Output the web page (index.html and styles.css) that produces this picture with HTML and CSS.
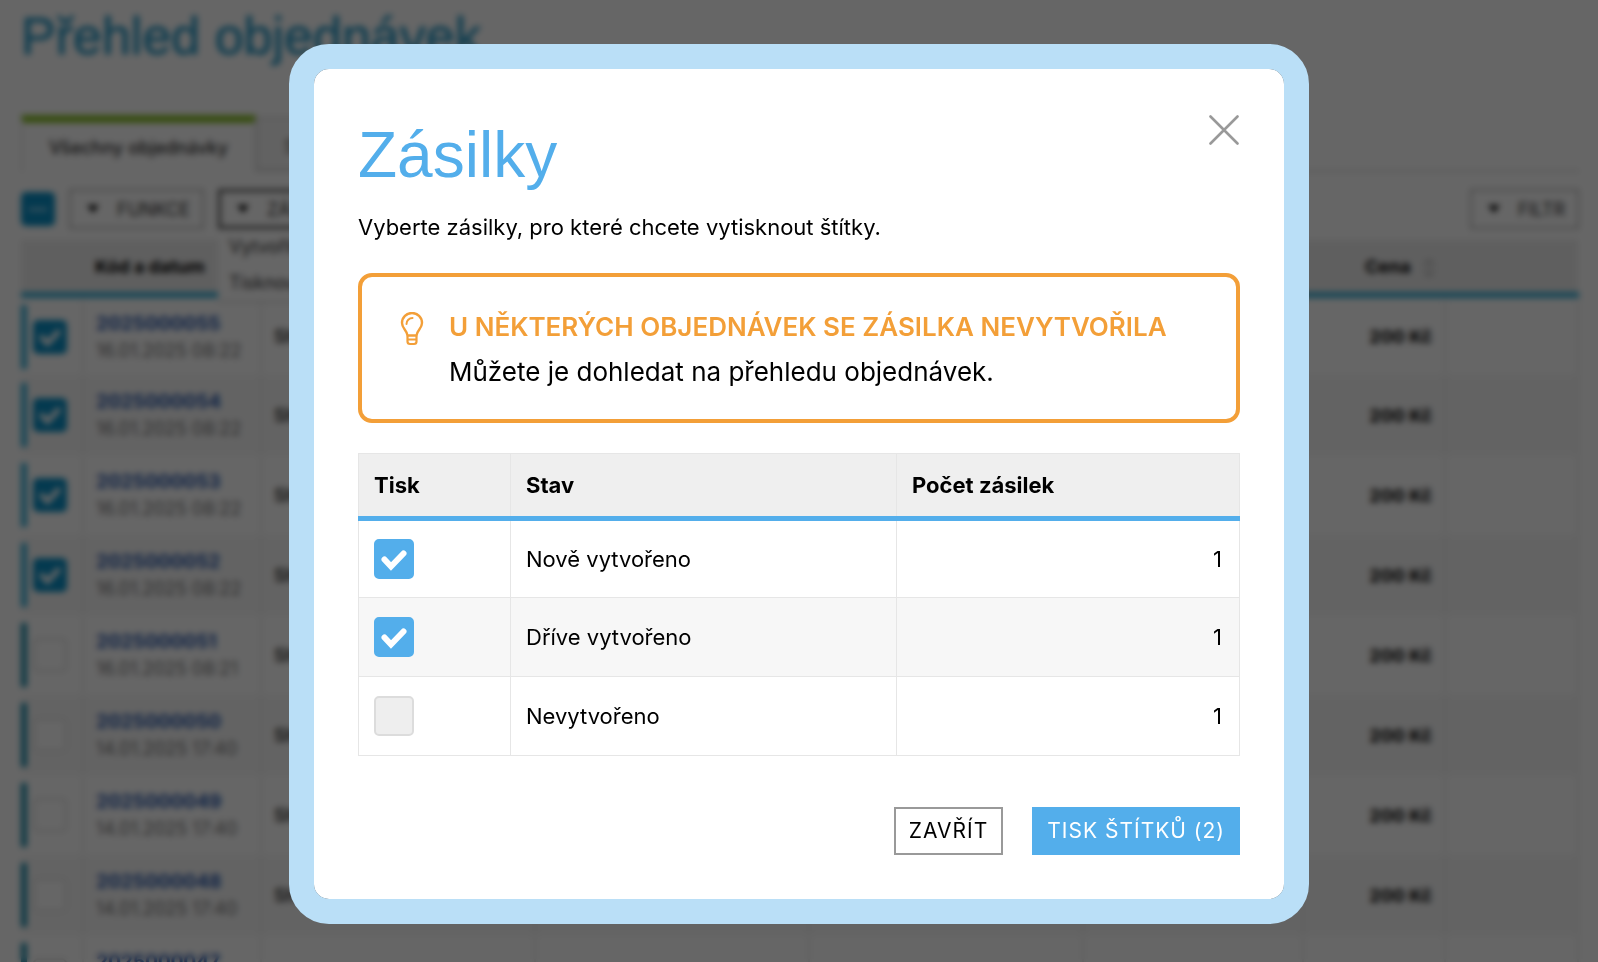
FILE: index.html
```
<!DOCTYPE html>
<html lang="cs">
<head>
    <meta charset="UTF-8">
    <meta name="viewport" content="width=device-width, initial-scale=1.0">
    <title>Přehled objednávek</title>
    <link rel="stylesheet" href="styles.css">
</head>
<body>
    <!-- Přehled objednávek -->
    <main class="page">
        <h1 class="page-title">Přehled objednávek</h1>

        <nav class="tabs">
            <a href="#" class="tab tab-active">Všechny objednávky</a>
            <a href="#" class="tab">Stavy</a>
        </nav>

        <div class="toolbar">
            <button class="select-all" aria-label="Zrušit výběr"></button>
            <button class="tool-btn">Funkce</button>
            <div class="dropdown">
                <button class="tool-btn tool-btn-open">Zásilky</button>
                <div class="dropdown-menu">
                    <a href="#">Vytvořit</a>
                    <a href="#">Tisknout</a>
                </div>
            </div>
            <button class="tool-btn tool-btn-filter">Filtr</button>
        </div>

        <table class="orders">
            <colgroup>
                <col class="col-check"><col class="col-code"><col class="col-name"><col class="col-name"><col class="col-name"><col class="col-ship"><col class="col-price"><col class="col-action">
            </colgroup>
            <thead>
                <tr><th></th><th>Kód a datum</th><th></th><th></th><th></th><th></th><th class="price">Cena <span class="sort"></span></th><th></th></tr>
            </thead>
            <tbody>
                <tr>
                    <td><input type="checkbox" aria-label="2025000055" checked></td>
                    <td><a href="#">2025000055</a><span class="date">16.01.2025 08:22</span></td>
                    <td class="name">Sh</td><td></td><td></td><td></td><td class="price">200 Kč</td><td></td>
                </tr>
                <tr>
                    <td><input type="checkbox" aria-label="2025000054" checked></td>
                    <td><a href="#">2025000054</a><span class="date">16.01.2025 08:22</span></td>
                    <td class="name">Sh</td><td></td><td></td><td></td><td class="price">200 Kč</td><td></td>
                </tr>
                <tr>
                    <td><input type="checkbox" aria-label="2025000053" checked></td>
                    <td><a href="#">2025000053</a><span class="date">16.01.2025 08:22</span></td>
                    <td class="name">Sh</td><td></td><td></td><td></td><td class="price">200 Kč</td><td></td>
                </tr>
                <tr>
                    <td><input type="checkbox" aria-label="2025000052" checked></td>
                    <td><a href="#">2025000052</a><span class="date">16.01.2025 08:22</span></td>
                    <td class="name">Sh</td><td></td><td></td><td></td><td class="price">200 Kč</td><td></td>
                </tr>
                <tr class="seen">
                    <td><input type="checkbox" aria-label="2025000051"></td>
                    <td><a href="#">2025000051</a><span class="date">16.01.2025 08:21</span></td>
                    <td class="name">Sh</td><td></td><td></td><td></td><td class="price">200 Kč</td><td></td>
                </tr>
                <tr class="seen">
                    <td><input type="checkbox" aria-label="2025000050"></td>
                    <td><a href="#">2025000050</a><span class="date">14.01.2025 17:40</span></td>
                    <td class="name">Sh</td><td></td><td></td><td></td><td class="price">200 Kč</td><td></td>
                </tr>
                <tr class="seen">
                    <td><input type="checkbox" aria-label="2025000049"></td>
                    <td><a href="#">2025000049</a><span class="date">14.01.2025 17:40</span></td>
                    <td class="name">Sh</td><td></td><td></td><td></td><td class="price">200 Kč</td><td></td>
                </tr>
                <tr class="seen">
                    <td><input type="checkbox" aria-label="2025000048"></td>
                    <td><a href="#">2025000048</a><span class="date">14.01.2025 17:40</span></td>
                    <td class="name">Sh</td><td></td><td></td><td></td><td class="price">200 Kč</td><td></td>
                </tr>
                <tr class="seen">
                    <td><input type="checkbox" aria-label="2025000047"></td>
                    <td><a href="#">2025000047</a><span class="date">14.01.2025 17:40</span></td>
                    <td class="name">Sh</td><td></td><td></td><td></td><td class="price">200 Kč</td><td></td>
                </tr>
            </tbody>
        </table>
    </main>

    <!-- Modální okno -->
    <div class="overlay">
        <div class="modal" role="dialog" aria-labelledby="modalTitle">
            <button class="modal-close" aria-label="Zavřít okno">
                <svg width="30" height="30" viewBox="0 0 30 30" fill="none" stroke="#999" stroke-width="2.6" stroke-linecap="round">
                    <path d="M1.5 1.5 28.5 28.5M28.5 1.5 1.5 28.5"/>
                </svg>
            </button>
            <h2 class="modal-title" id="modalTitle">Zásilky</h2>
            <p class="modal-text">Vyberte zásilky, pro které chcete vytisknout štítky.</p>

            <div class="alert">
                <svg class="alert-icon" width="24" height="34" viewBox="0 0 24 34" fill="none" stroke="#f39f38" stroke-width="2.4" stroke-linejoin="round">
                    <path d="M7.500 23.500C7 18 2 16.500 2 11a10 10 0 0 1 20 0c0 5.500-5 7-5.500 12.500z"/>
                    <path d="M6.500 12A6 6 0 0 1 12.500 6" stroke-width="2" stroke-linecap="round"/>
                    <path d="M7.500 23.500V29.500a2.500 2.500 0 0 0 2.500 2.500h4a2.500 2.500 0 0 0 2.500-2.500v-6M7.500 27.500h9" stroke-width="2.200"/>
                </svg>
                <div>
                    <h3 class="alert-title">U některých objednávek se zásilka nevytvořila</h3>
                    <p class="alert-text">Můžete je dohledat na přehledu objednávek.</p>
                </div>
            </div>

            <table class="shipments">
                <colgroup><col class="col-print"><col class="col-state"><col></colgroup>
                <thead>
                    <tr><th>Tisk</th><th>Stav</th><th>Počet zásilek</th></tr>
                </thead>
                <tbody>
                    <tr>
                        <td><input type="checkbox" id="stateNew" checked></td>
                        <td><label for="stateNew">Nově vytvořeno</label></td>
                        <td class="count">1</td>
                    </tr>
                    <tr>
                        <td><input type="checkbox" id="stateOld" checked></td>
                        <td><label for="stateOld">Dříve vytvořeno</label></td>
                        <td class="count">1</td>
                    </tr>
                    <tr>
                        <td><input type="checkbox" id="stateNone" disabled></td>
                        <td><label for="stateNone">Nevytvořeno</label></td>
                        <td class="count">1</td>
                    </tr>
                </tbody>
            </table>

            <div class="modal-actions">
                <button class="btn">Zavřít</button>
                <button class="btn btn-primary">Tisk štítků (2)</button>
            </div>
        </div>
    </div>
</body>
</html>
```
FILE: styles.css
```
* { margin: 0; padding: 0; box-sizing: border-box; }
body { height: 100vh; overflow: hidden; background: #fff; font-family: 'Inter', sans-serif; font-size: 18px; color: #000; }
a { text-decoration: none; }
button { font: inherit; color: inherit; background: #fff; cursor: pointer; }
table { width: 100%; border-collapse: collapse; table-layout: fixed; }

/* Zaškrtávací políčka */
input[type="checkbox"] { appearance: none; display: block; border: 2px solid #ddd; border-radius: 5px; background: #fff; }
input[type="checkbox"]:checked { border-color: #53aeeb; background: #53aeeb url("data:image/svg+xml,%3Csvg xmlns='http://www.w3.org/2000/svg' viewBox='0 0 40 40' fill='none' stroke='white' stroke-width='6' stroke-linecap='round'%3E%3Cpath d='M10.500 20.500 17 27.500 29.500 14.500'/%3E%3C/svg%3E") center / 100% no-repeat; background-origin: border-box; }
input[type="checkbox"]:disabled { border-color: #dcdcdc; background: #eee; }

/* Stránka s objednávkami */
.page { padding: 0 19px 0 21px; }
.page-title { height: 115px; font-family: 'Liberation Sans', sans-serif; font-size: 52px; line-height: 72px; font-weight: 400; color: #2f9cc8; -webkit-text-stroke: 1px #2f9cc8; }

.tabs { display: flex; align-items: flex-end; height: 57px; border-bottom: 2px solid #ddd; }
.tab { height: 53px; padding: 0 26px; line-height: 56px; color: #555; background: #f5f5f5; border: 2px solid #ddd; }
.tab-active { height: 57px; line-height: 50px; margin-bottom: -2px; color: #333; background: #fff; border: 2px solid #e8e8e8; border-top: 8px solid #8ac02c; border-bottom: 0; font-weight: 500; }

.toolbar { display: flex; align-items: center; gap: 14px; padding: 17px 0 11px; }
.select-all { width: 34px; height: 34px; border: 0; border-radius: 5px; background: linear-gradient(#9cd4f2, #9cd4f2) center / 18px 3px no-repeat #0a90c6; }
.tool-btn { display: flex; align-items: center; gap: 18px; height: 40px; padding: 0 12px 0 16px; border: 2px solid #bbb; text-transform: uppercase; color: #333; }
.tool-btn::before { content: ''; border: 6px solid transparent; border-top: 8px solid #111; border-bottom: 0; }
.tool-btn-open { border: 3px solid #555; }
.tool-btn-filter { margin-left: auto; }
.dropdown { position: relative; }
.dropdown-menu { position: absolute; top: 40px; left: 0; width: 260px; padding: 0 11px; background: #fff; border-bottom: 2px solid #ddd; z-index: 1; }
.dropdown-menu a { display: block; line-height: 36px; color: #333; }

.col-check { width: 62px; }
.col-code { width: 178px; }
.col-name { width: 274px; }
.col-ship { width: 220px; }
.col-price { width: 142px; }
.orders th { height: 55px; padding: 0 12px; background: #eee; border-bottom: 6px solid #39b0d8; text-align: left; font-weight: 700; }
.orders td { height: 80px; padding: 0 12px; border-right: 2px solid #eee; line-height: 27px; }
.orders tr:nth-child(even) td { background-color: #f8f8f8; }
.orders tr td:first-child { background-image: linear-gradient(#39b0d8, #39b0d8); background-size: 6px 64px; background-position: left center; background-repeat: no-repeat; }
.orders .seen td:first-child { background-image: linear-gradient(#1f8cab, #1f8cab); }
.orders input[type="checkbox"] { width: 34px; height: 34px; }
.orders input[type="checkbox"]:checked { border-color: #0a90c6; background-color: #0a90c6; }
.orders a { display: block; font-weight: 700; font-size: 19px; color: #2858ae; }
.orders .date { display: block; color: #777; white-space: nowrap; }
.orders .name { font-weight: 600; color: #333; }
.orders .price { text-align: right; font-weight: 700; }
.sort { display: inline-block; width: 8px; height: 16px; margin-left: 10px; border: 2px dotted #999; vertical-align: middle; }

/* Překrytí a modální okno */
.overlay { position: fixed; inset: 0; z-index: 10; padding: 44px 16px; background: rgba(0,0,0,0.6); backdrop-filter: blur(3px); }
.modal { position: relative; max-width: 1020px; margin: 0 auto; padding: 50px 44px; background: #fff; background-clip: padding-box; border: 25px solid #badff7; border-radius: 40px; padding-bottom: 44px; }
.modal-close { position: absolute; top: 46px; right: 45px; width: 30px; height: 30px; border: 0; }
.modal-title { font-family: 'Liberation Sans', sans-serif; font-size: 64px; line-height: 72px; font-weight: 400; color: #53aeeb; }
.modal-text { margin-top: 20px; font-size: 22px; line-height: 32px; }

.alert { display: flex; gap: 25px; margin-top: 30px; padding: 27px 38px 25px; border: 4px solid #f39f38; border-radius: 14px; font-size: 26px; line-height: 45px; }
.alert-icon { flex: none; margin-top: 8px; }
.alert-title { font-size: 26px; font-weight: 600; color: #f39f38; text-transform: uppercase; }

.shipments { margin-top: 30px; font-size: 22px; line-height: 32px; }
.shipments th { height: 65px; padding: 0 15px; background: #efefef; border: 1px solid #e6e6e6; border-bottom: 5px solid #53aeeb; text-align: left; font-weight: 700; }
.shipments td { height: 79px; padding: 0 15px; border: 1px solid #e6e6e6; }
.shipments tr:nth-child(even) td { background: #f7f7f7; }
.shipments .count { padding-right: 17px; text-align: right; }
.shipments input[type="checkbox"] { width: 40px; height: 40px; }
.col-print { width: 152px; }
.col-state { width: 386px; }

.modal-actions { display: flex; justify-content: flex-end; gap: 29px; margin-top: 51px; }
.btn { height: 48px; padding: 0 13px; border: 2px solid #999; font-size: 21px; line-height: 32px; letter-spacing: 1px; text-transform: uppercase; }
.btn-primary { border-color: #53aeeb; background: #53aeeb; color: #fff; }
```
